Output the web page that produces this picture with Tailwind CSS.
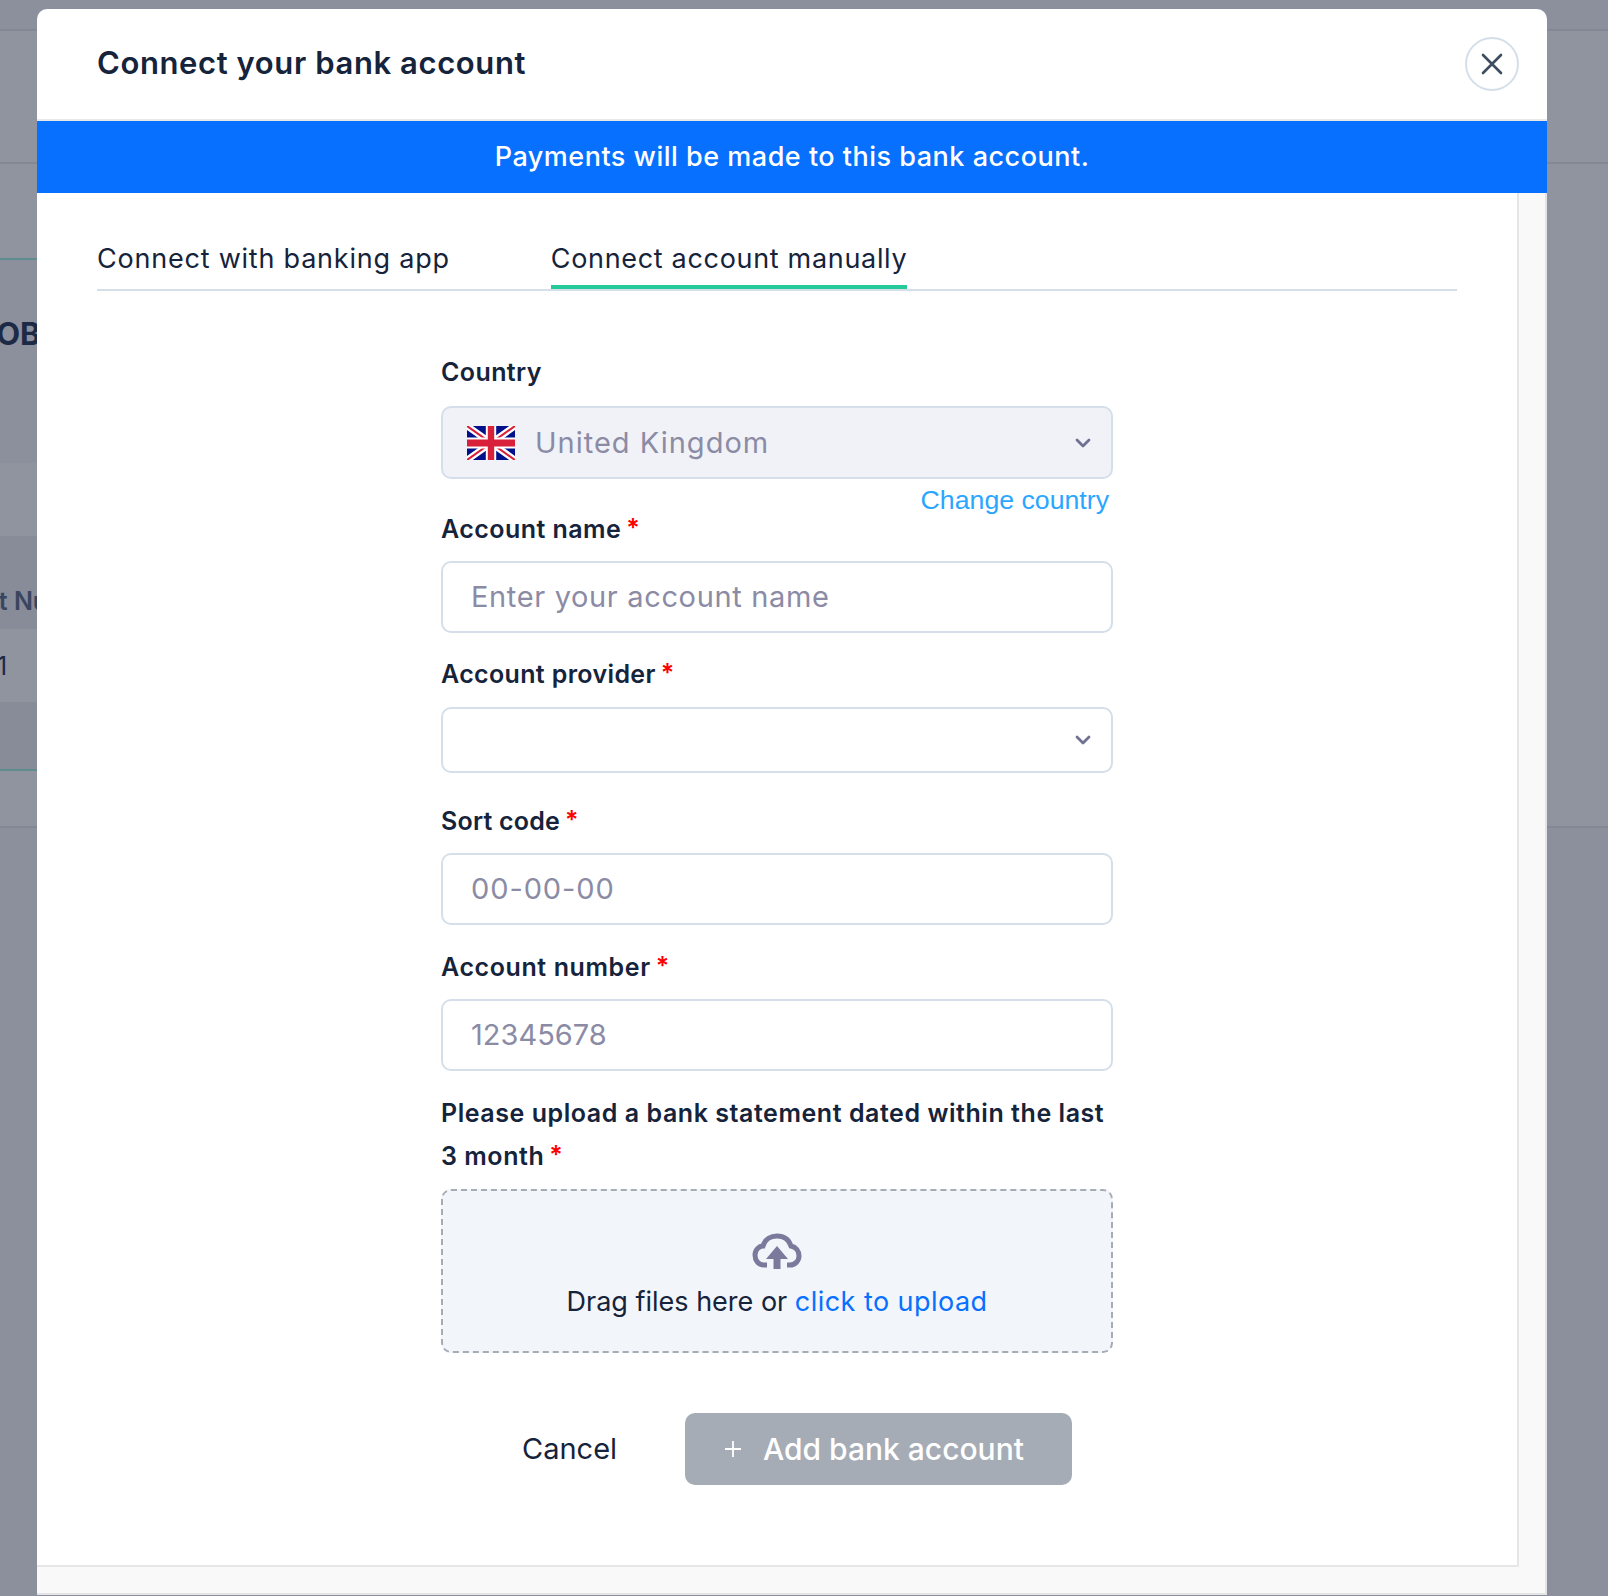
<!DOCTYPE html>
<html lang="en">
<head>
    <meta charset="UTF-8">
    <title>Connect your bank account</title>
    <script src="https://cdn.jsdelivr.net/npm/@tailwindcss/browser@4"></script>
</head>
<body class="bg-[#8b909c] font-['Inter',sans-serif] text-[#15233b]">
    <div class="relative w-[1608px] h-[1596px] overflow-hidden">
        <!-- Page behind the overlay -->
        <div class="flex flex-col w-full">
            <div class="h-[31px] border-b-2 border-[#838894]"></div>
            <div class="bg-[#8f949f] border-b-2 border-[#838894]">
                <div class="h-[133px] border-b-2 border-[#838894]"></div>
                <div class="h-[96px] border-b-2 border-[#5f8d8f] w-[37px]"></div>
                <div class="h-[203px] w-[37px] overflow-hidden bg-[#8b909c]">
                    <p class="mt-[56px] -ml-[27px] whitespace-nowrap text-[31px] font-bold leading-[36px] text-[#1d2a45]">HOB</p>
                </div>
                <div class="h-[73px] w-[37px]"></div>
                <div class="h-[93px] bg-[#878c98] w-[37px] overflow-hidden">
                    <p class="mt-[50px] -ml-[94px] whitespace-nowrap text-[25px] font-semibold leading-[30px] text-[#3a4560]">Account Number</p>
                </div>
                <div class="h-[73px] w-[37px] overflow-hidden">
                    <p class="mt-[22px] -ml-[3px] whitespace-nowrap text-[25px] leading-[30px] text-[#1d2a45]">1</p>
                </div>
                <div class="h-[69px] bg-[#878c98] border-b-2 border-[#5f8d8f] w-[37px]"></div>
                <div class="h-[55px]"></div>
            </div>
        </div>

        <!-- Modal -->
        <div class="absolute left-[37px] top-[9px] w-[1510px] h-[1586px] flex flex-col rounded-t-[10px] bg-white">
            <div class="h-[112px] shrink-0 flex items-center justify-between pl-[60px] pr-[28px] border-b-2 border-[#e8e8e8] rounded-t-[10px]">
                <h2 class="pb-[2px] text-[31px] font-semibold leading-[36px] tracking-[0.6px]">Connect your bank account</h2>
                <button class="w-[54px] h-[54px] rounded-full border-2 border-[#d5dfe9] flex items-center justify-center">
                    <svg width="22" height="22" viewBox="0 0 22 22" fill="none" stroke="#3d4d5e" stroke-width="2.6" stroke-linecap="round"><path d="M2 2 L20 20 M20 2 L2 20"/></svg>
                </button>
            </div>
            <div class="h-[72px] shrink-0 bg-[#0770ff] flex items-center justify-center text-white text-[27px] font-medium tracking-[0.5px]">
                Payments will be made to this bank account.
            </div>
            <div class="flex-1 bg-[#f9f9f9] border-r-2 border-b-2 border-[#e4e4e4]">
                <div class="w-[1482px] h-[1374px] bg-white border-r-2 border-b-2 border-[#e6e6e6]">
                    <div class="mx-[60px] w-[1360px] h-[98px] flex items-end gap-[101px] border-b-2 border-[#d5dfe9] text-[27px]">
                        <div class="pt-[2px] leading-[40px] h-[52px] border-b-4 border-transparent tracking-[0.78px]">Connect with banking app</div>
                        <div class="pt-[2px] leading-[40px] h-[52px] border-b-4 border-[#26c99a] tracking-[0.68px]">Connect account manually</div>
                    </div>

                    <form class="ml-[404px] w-[672px] pt-[59px]">
                        <label class="block h-[44px] leading-[45px] text-[25px] font-semibold tracking-[0.4px]">Country</label>
                        <div class="mt-[12px] h-[73px] flex items-center rounded-[10px] border-2 border-[#d5dfe9] bg-[#f1f2f8] pl-[24px] pr-[20px]">
                            <svg width="48" height="34" viewBox="0 0 60 40" preserveAspectRatio="none">
                                <rect width="60" height="40" fill="#00108a"/>
                                <path d="M0 0 L60 40 M60 0 L0 40" stroke="#fff" stroke-width="8"/>
                                <path d="M0 0 L60 40 M60 0 L0 40" stroke="#d8203a" stroke-width="2.5"/>
                                <path d="M30 0 V40 M0 20 H60" stroke="#fff" stroke-width="13"/>
                                <path d="M30 0 V40 M0 20 H60" stroke="#d8203a" stroke-width="8"/>
                            </svg>
                            <span class="ml-[20px] text-[29px] text-[#8b8ba5] tracking-[1px]">United Kingdom</span>
                            <svg class="ml-auto" width="16" height="10" viewBox="0 0 16 10" fill="none" stroke="#6e7191" stroke-width="2.8" stroke-linecap="round" stroke-linejoin="round"><path d="M2 2 L8 8 L14 2"/></svg>
                        </div>
                        <div class="mt-[6px] h-[30px] pr-[4px] text-right text-[26.7px] leading-[30px] text-[#2ba6ff] font-['Liberation_Sans',sans-serif]">Change country</div>

                        <label class="block -mt-[9px] h-[44px] leading-[46px] text-[25px] font-semibold tracking-[0.45px]">Account name<span class="relative -top-[1px] ml-[5px] text-[#f00]">*</span></label>
                        <div class="mt-[11px] h-[72px] flex items-center rounded-[10px] border-2 border-[#d5dfe9] pl-[28px] text-[29px] text-[#8b8ba5] tracking-[0.65px]">Enter your account name</div>

                        <label class="block mt-[19px] h-[44px] leading-[45px] text-[25px] font-semibold tracking-[0.35px]">Account provider<span class="relative -top-[1px] ml-[5px] text-[#f00]">*</span></label>
                        <div class="mt-[11px] h-[66px] flex items-center justify-end rounded-[10px] border-2 border-[#d5dfe9] pr-[20px]">
                            <svg width="16" height="10" viewBox="0 0 16 10" fill="none" stroke="#6e7191" stroke-width="2.8" stroke-linecap="round" stroke-linejoin="round"><path d="M2 2 L8 8 L14 2"/></svg>
                        </div>

                        <label class="block mt-[25px] h-[44px] leading-[46px] text-[25px] font-semibold tracking-[0.2px]">Sort code<span class="relative -top-[1px] ml-[5px] text-[#f00]">*</span></label>
                        <div class="mt-[11px] h-[72px] flex items-center rounded-[10px] border-2 border-[#d5dfe9] pl-[28px] text-[29px] text-[#8b8ba5] tracking-[0.9px]">00-00-00</div>

                        <label class="block mt-[19px] h-[44px] leading-[46px] text-[25px] font-semibold tracking-[0.6px]">Account number<span class="relative -top-[1px] ml-[5px] text-[#f00]">*</span></label>
                        <div class="mt-[11px] h-[72px] flex items-center rounded-[10px] border-2 border-[#d5dfe9] pl-[28px] text-[29px] text-[#8b8ba5]">12345678</div>

                        <label class="relative top-[1px] block mt-[20px] leading-[43px] text-[25px] font-semibold tracking-[0.55px]">Please upload a bank statement dated within the last<br>3 month<span class="relative -top-[1px] ml-[5px] text-[#f00]">*</span></label>
                        <div class="mt-[12px] h-[164px] flex flex-col items-center rounded-[10px] border-2 border-dashed border-[#a5acb5] bg-[#f2f5f9] pt-[42px]">
                            <svg width="50" height="36" viewBox="0 0 50 36">
                                <path d="M15 32 H12 C6 32 3 27 3 22 C3 17 7 13 11 13 C13 6 19 3 25 3 C32 3 37 7 39 13 C44 14 47 18 47 23 C47 28 43 32 38 32 H35" fill="none" stroke="#7a7a9d" stroke-width="5"/>
                                <path d="M25 13 L36 26 H28.5 V36 H21.5 V26 H14 Z" fill="#7a7a9d"/>
                            </svg>
                            <p class="mt-[15px] text-[27px] leading-[36px]">Drag files here or <span class="text-[#0770ff] tracking-[0.45px]">click to upload</span></p>
                        </div>

                        <div class="mt-[60px] flex items-center">
                            <button type="button" class="ml-[81px] w-[95px] text-left text-[29px] leading-[72px]">Cancel</button>
                            <button type="button" class="ml-[68px] w-[387px] h-[72px] rounded-[10px] bg-[#a5acb5] text-white text-[30px] font-medium flex items-center pl-[39px]">
                                <svg width="18" height="18" viewBox="0 0 18 18" stroke="#fff" stroke-width="1.8"><path d="M9 1 V17 M1 9 H17"/></svg>
                                <span class="ml-[21px]">Add bank account</span>
                            </button>
                        </div>
                    </form>
                </div>
            </div>
        </div>
    </div>
</body>
</html>
